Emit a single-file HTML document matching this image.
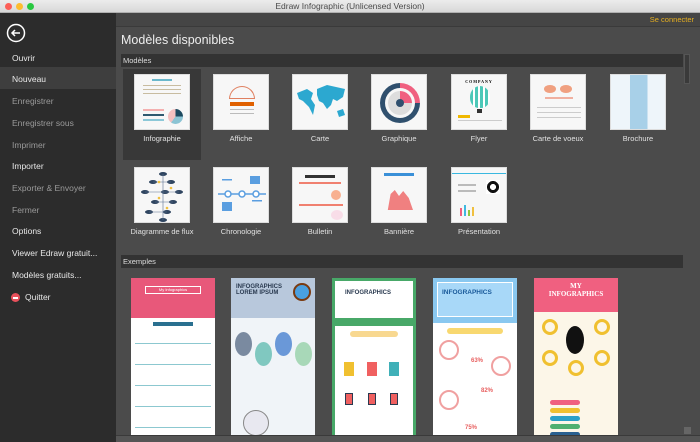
<!DOCTYPE html>
<html><head><meta charset="utf-8"><style>
*{margin:0;padding:0;box-sizing:border-box}
body{width:700px;height:442px;overflow:hidden;background:#4a4a4a;font-family:"Liberation Sans",sans-serif;position:relative}
.tb{position:absolute;left:0;top:0;width:700px;height:13px;background:linear-gradient(#ececec,#d8d8d8);border-bottom:1px solid #b0b0b0;font-size:8.5px;color:#4a4a4a;text-align:center;line-height:13px}
.dot{position:absolute;top:3px;width:7px;height:7px;border-radius:50%}
.side{position:absolute;left:0;top:13px;width:116px;height:429px;background:#2c2c2c}
.side div.i{position:absolute;left:12px;font-size:8.5px;color:#e8e8e8}
.side div.g{color:#9a9a9a}
.hl{position:absolute;left:0;top:54px;width:116px;height:22px;background:#3e3e3e}
.top{position:absolute;left:116px;top:13px;width:584px;height:14px;background:#454545;border-bottom:1px solid #3a3a3a}
.main{position:absolute;left:116px;top:27px;width:584px;height:408px;background:#4b4b4b}
.h1{position:absolute;left:121px;top:33px;font-size:12.5px;color:#eee}
.bar{position:absolute;left:121px;width:562px;height:13px;background:#333;color:#ddd;font-size:7.5px;line-height:13px;padding-left:2px}
.th{position:absolute;width:56px;height:56px;background:#f7f7f7;border:1px solid #ddd;overflow:hidden}
.lb{position:absolute;width:80px;text-align:center;font-size:7.5px;color:#e0e0e0}
.ex{position:absolute;top:278px;width:84px;height:157px;overflow:hidden;background:#fff}
</style></head><body>
<div class="tb">Edraw Infographic (Unlicensed Version)
<div class="dot" style="left:5px;background:#fc5f57"></div><div class="dot" style="left:16px;background:#fdbc2e"></div><div class="dot" style="left:27px;background:#29c840"></div></div>
<div class="side">
<div class="hl"></div>
<svg style="position:absolute;left:6px;top:10px" width="20" height="20"><circle cx="10" cy="10" r="8.5" fill="none" stroke="#fff" stroke-width="1.5"/><path d="M14 10H6M9 7L6 10L9 13" fill="none" stroke="#fff" stroke-width="1.5"/></svg>
<div class="i" style="top:40px">Ouvrir</div>
<div class="i" style="top:61px">Nouveau</div>
<div class="i g" style="top:83px">Enregistrer</div>
<div class="i g" style="top:105px">Enregistrer sous</div>
<div class="i g" style="top:127px">Imprimer</div>
<div class="i" style="top:148px">Importer</div>
<div class="i g" style="top:170px">Exporter &amp; Envoyer</div>
<div class="i g" style="top:192px">Fermer</div>
<div class="i" style="top:213px">Options</div>
<div class="i" style="top:235px">Viewer Edraw gratuit...</div>
<div class="i" style="top:257px">Modèles gratuits...</div>
<div class="i" style="top:279px;left:25px">Quitter</div>
<div style="position:absolute;left:11px;top:280px;width:9px;height:9px;border-radius:50%;background:#e8505b"><div style="margin:4px 2px 0;height:1.5px;background:#fff"></div></div>
</div>
<div class="top"><span style="position:absolute;right:6px;top:2px;font-size:7.5px;color:#e8b020">Se connecter</span></div>
<div class="main"></div>
<div class="h1">Modèles disponibles</div>
<div class="bar" style="top:54px">Modèles</div>
<div style="position:absolute;left:684px;top:54px;width:6px;height:30px;background:#3a3a3a;border:1px solid #555"></div>
<div style="position:absolute;left:123px;top:69px;width:78px;height:91px;background:#383838"></div>
<!-- row 1 -->
<div class="th" style="left:134px;top:74px"><div style="margin:4px 17px;height:2px;background:#6ab8cc"></div><div style="margin:4px 8px 0;height:1px;background:#c8bca0"></div><div style="margin:3px 8px 0;height:1px;background:#c8bca0"></div><div style="margin:3px 8px 0;height:1px;background:#c8bca0"></div><div style="position:absolute;left:8px;top:34px;width:21px;height:2px;background:#f4b0b0"></div><div style="position:absolute;left:8px;top:39px;width:21px;height:2px;background:#2f5a70"></div><div style="position:absolute;left:8px;top:44px;width:21px;height:2px;background:#8cc8d8"></div><div style="position:absolute;left:33px;top:34px;width:15px;height:15px;border-radius:50%;background:conic-gradient(#1c4a60 0 25%,#8cc4d4 25% 60%,#f4c0c0 60%)"></div></div>
<div class="th" style="left:213px;top:74px"><div style="position:absolute;left:15px;top:11px;width:26px;height:13px;border:1.5px solid #e08060;border-radius:13px 13px 0 0"></div><div style="position:absolute;left:16px;top:27px;width:24px;height:4px;background:#e06000"></div><div style="position:absolute;left:16px;top:34px;width:24px;height:1px;background:#bbb"></div><div style="position:absolute;left:16px;top:38px;width:24px;height:1px;background:#bbb"></div></div>
<div class="th" style="left:292px;top:74px"><svg width="56" height="56"><path d="M4 18 L14 14 L20 18 L18 24 L22 30 L20 40 L16 32 L10 26 L6 24Z M24 14 L34 10 L52 14 L50 22 L44 26 L40 24 L38 30 L34 34 L30 28 L26 26 L24 20Z M44 36 L50 34 L52 40 L46 42Z" fill="#2ca8d0"/></svg></div>
<div class="th" style="left:371px;top:74px"><div style="position:absolute;left:8px;top:8px;width:40px;height:40px;border-radius:50%;background:conic-gradient(#f06080 0 25%,#30506e 25%)"></div><div style="position:absolute;left:13px;top:13px;width:30px;height:30px;border-radius:50%;background:#f7f7f7"></div><div style="position:absolute;left:16px;top:16px;width:24px;height:24px;border-radius:50%;background:conic-gradient(#f06080 0 25%,#ddd 25%)"></div><div style="position:absolute;left:24px;top:24px;width:8px;height:8px;border-radius:50%;background:#30506e"></div></div>
<div class="th" style="left:451px;top:74px"><div style="text-align:center;font:bold 4px 'Liberation Serif',serif;letter-spacing:1px;margin-top:4px">COMPANY</div><div style="position:absolute;left:18px;top:11px;width:20px;height:22px;border-radius:50% 50% 45% 45%;background:repeating-linear-gradient(90deg,#4cc8b8 0 3px,#fff 3px 5px)"></div><div style="position:absolute;left:25px;top:34px;width:5px;height:4px;background:#333"></div><div style="position:absolute;left:6px;top:40px;width:12px;height:3px;background:#f0b800"></div><div style="position:absolute;left:6px;top:45px;width:44px;height:1px;background:#ccc"></div></div>
<div class="th" style="left:530px;top:74px"><div style="position:absolute;left:13px;top:10px;width:12px;height:8px;border-radius:50%;background:#f0a080"></div><div style="position:absolute;left:29px;top:10px;width:12px;height:8px;border-radius:50%;background:#f0a080"></div><div style="position:absolute;left:14px;top:22px;width:28px;height:2px;background:#f0b0a0"></div><div style="position:absolute;left:6px;top:32px;width:44px;height:1px;background:#ccc"></div><div style="position:absolute;left:6px;top:37px;width:44px;height:1px;background:#ccc"></div><div style="position:absolute;left:6px;top:42px;width:44px;height:1px;background:#ccc"></div></div>
<div class="th" style="left:610px;top:74px;background:linear-gradient(90deg,#eef5fa 0 35%,#a8d0e8 35% 68%,#eef5fa 68%)"></div>
<div class="lb" style="left:122px;top:134px">Infographie</div>
<div class="lb" style="left:201px;top:134px">Affiche</div>
<div class="lb" style="left:280px;top:134px">Carte</div>
<div class="lb" style="left:359px;top:134px">Graphique</div>
<div class="lb" style="left:439px;top:134px">Flyer</div>
<div class="lb" style="left:518px;top:134px">Carte de voeux</div>
<div class="lb" style="left:598px;top:134px">Brochure</div>
<!-- row 2 -->
<div class="th" style="left:134px;top:167px"><svg width="56" height="56" fill="#2f4560"><ellipse cx="28" cy="6" rx="4" ry="2"/><ellipse cx="18" cy="14" rx="4" ry="2"/><ellipse cx="36" cy="14" rx="4" ry="2"/><ellipse cx="10" cy="24" rx="4" ry="2"/><ellipse cx="30" cy="24" rx="4" ry="2"/><ellipse cx="44" cy="24" rx="4" ry="2"/><ellipse cx="20" cy="34" rx="4" ry="2"/><ellipse cx="38" cy="34" rx="4" ry="2"/><ellipse cx="14" cy="44" rx="4" ry="2"/><ellipse cx="32" cy="44" rx="4" ry="2"/><ellipse cx="28" cy="52" rx="4" ry="2"/><path d="M28 6V52M18 14H36M10 24H44M20 34H38M14 44H32" stroke="#5a7090" stroke-width=".6" fill="none"/><circle cx="24" cy="14" r="1.3" fill="#f0c040"/><circle cx="36" cy="20" r="1.3" fill="#f0c040"/><circle cx="24" cy="30" r="1.3" fill="#f0c040"/><circle cx="32" cy="40" r="1.3" fill="#f0c040"/></svg></div>
<div class="th" style="left:213px;top:167px"><svg width="56" height="56"><path d="M4 26H52" stroke="#5a9ee0" stroke-width="1.5"/><circle cx="14" cy="26" r="3" fill="#fff" stroke="#5a9ee0" stroke-width="1.5"/><circle cx="28" cy="26" r="3" fill="#fff" stroke="#5a9ee0" stroke-width="1.5"/><circle cx="42" cy="26" r="3" fill="#fff" stroke="#5a9ee0" stroke-width="1.5"/><rect x="36" y="8" width="10" height="8" fill="#5a9ee0"/><rect x="8" y="34" width="10" height="9" fill="#5a9ee0"/><rect x="8" y="11" width="10" height="1.5" fill="#5a9ee0"/><rect x="38" y="32" width="10" height="1.5" fill="#5a9ee0"/></svg></div>
<div class="th" style="left:292px;top:167px"><div style="margin:7px 12px 0;height:3px;background:#333"></div><div style="margin:4px 6px 0;height:2px;background:#f08070"></div><div style="position:absolute;left:38px;top:22px;width:10px;height:10px;border-radius:50%;background:#f8b090"></div><div style="position:absolute;left:6px;top:36px;width:44px;height:2px;background:#f08070"></div><div style="position:absolute;left:38px;top:42px;width:12px;height:10px;border-radius:50%;background:#f8dde8"></div></div>
<div class="th" style="left:371px;top:167px"><div style="margin:5px 12px 0;height:3px;background:#3a90d8"></div><div style="position:absolute;left:13px;top:22px;width:28px;height:20px;background:#f08080;clip-path:polygon(10% 100%,20% 20%,35% 0,50% 30%,65% 5%,85% 40%,100% 100%)"></div></div>
<div class="th" style="left:451px;top:167px"><div style="margin-top:5px;height:1px;background:#3ab8e0"></div><div style="position:absolute;left:6px;top:16px;width:18px;height:1.5px;background:#bbb"></div><div style="position:absolute;left:6px;top:22px;width:18px;height:1.5px;background:#bbb"></div><div style="position:absolute;left:34px;top:12px;width:14px;height:14px;background:radial-gradient(circle,#fff 30%,#111 31% 60%,#fff 61%)"></div><div style="position:absolute;left:8px;top:40px;width:2px;height:8px;background:#f06080"></div><div style="position:absolute;left:12px;top:37px;width:2px;height:11px;background:#40b8e0"></div><div style="position:absolute;left:16px;top:42px;width:2px;height:6px;background:#90c840"></div><div style="position:absolute;left:20px;top:39px;width:2px;height:9px;background:#f0c040"></div></div>
<div class="lb" style="left:122px;top:227px">Diagramme de flux</div>
<div class="lb" style="left:201px;top:227px">Chronologie</div>
<div class="lb" style="left:280px;top:227px">Bulletin</div>
<div class="lb" style="left:359px;top:227px">Bannière</div>
<div class="lb" style="left:439px;top:227px">Présentation</div>
<div class="bar" style="top:255px">Exemples</div>
<!-- examples -->
<div class="ex" style="left:131px;background:#fff"><div style="height:40px;background:#e8587a"></div><div style="position:absolute;left:14px;top:8px;width:56px;height:8px;border:1px solid #fff;color:#fff;font-size:4px;text-align:center">My Infographics</div><div style="position:absolute;left:22px;top:44px;width:40px;height:4px;background:#2a7090"></div><div style="position:absolute;left:4px;top:65px;width:76px;height:1px;background:#8cc8d0"></div><div style="position:absolute;left:4px;top:86px;width:76px;height:1px;background:#8cc8d0"></div><div style="position:absolute;left:4px;top:107px;width:76px;height:1px;background:#8cc8d0"></div><div style="position:absolute;left:4px;top:128px;width:76px;height:1px;background:#8cc8d0"></div><div style="position:absolute;left:4px;top:149px;width:76px;height:1px;background:#8cc8d0"></div></div>
<div class="ex" style="left:231px;background:#f0f4f8"><div style="height:40px;background:#b8c8dc"></div><div style="position:absolute;left:5px;top:6px;font:bold 6px 'Liberation Sans';color:#2a3a50">INFOGRAPHICS<br>LOREM IPSUM</div><div style="position:absolute;left:62px;top:5px;width:18px;height:18px;border-radius:50%;background:#4aa0e0;border:2px solid #7a3a10"></div><div style="position:absolute;left:4px;top:54px;width:17px;height:24px;border-radius:50%;background:#7a8aa0"></div><div style="position:absolute;left:24px;top:64px;width:17px;height:24px;border-radius:50%;background:#80c8c0"></div><div style="position:absolute;left:44px;top:54px;width:17px;height:24px;border-radius:50%;background:#6a98d8"></div><div style="position:absolute;left:64px;top:64px;width:17px;height:24px;border-radius:50%;background:#a8d8b8"></div><div style="position:absolute;left:12px;top:132px;width:26px;height:26px;border-radius:50%;background:#e8e8f0;border:1px solid #888"></div></div>
<div class="ex" style="left:332px;background:#48a868"><div style="position:absolute;left:3px;top:3px;width:78px;height:37px;background:#fff"></div><div style="position:absolute;left:13px;top:12px;font:bold 6px 'Liberation Sans';color:#2a3a50">INFOGRAPHICS</div><div style="position:absolute;left:3px;top:48px;width:78px;height:112px;background:#fff"></div><div style="position:absolute;left:18px;top:53px;width:48px;height:6px;border-radius:3px;background:#f8d890"></div><div style="position:absolute;left:12px;top:84px;width:10px;height:14px;background:#f0c030"></div><div style="position:absolute;left:35px;top:84px;width:10px;height:14px;background:#f06060"></div><div style="position:absolute;left:57px;top:84px;width:10px;height:14px;background:#40b0b8"></div><div style="position:absolute;left:13px;top:115px;width:8px;height:12px;background:#f06060;border:1px solid #2a3a50"></div><div style="position:absolute;left:36px;top:115px;width:8px;height:12px;background:#f06060;border:1px solid #2a3a50"></div><div style="position:absolute;left:58px;top:115px;width:8px;height:12px;background:#f06060;border:1px solid #2a3a50"></div></div>
<div class="ex" style="left:433px;background:#fff"><div style="height:45px;background:#8ac8f0;padding:4px"><div style="height:35px;background:#a8d8f8;border:1px solid #fff"></div></div><div style="position:absolute;left:9px;top:11px;font:bold 6.5px 'Liberation Sans';color:#1a5a9a">INFOGRAPHICS</div><div style="position:absolute;left:14px;top:50px;width:56px;height:6px;border-radius:3px;background:#f8d870"></div><div style="position:absolute;left:6px;top:62px;width:20px;height:20px;border-radius:50%;border:2px solid #f0a0a0"></div><div style="position:absolute;left:58px;top:78px;width:20px;height:20px;border-radius:50%;border:2px solid #f0a0a0"></div><div style="position:absolute;left:6px;top:112px;width:20px;height:20px;border-radius:50%;border:2px solid #f0a0a0"></div><div style="position:absolute;left:38px;top:80px;font:bold 6px 'Liberation Sans';color:#e86060">63%</div><div style="position:absolute;left:48px;top:110px;font:bold 6px 'Liberation Sans';color:#e86060">82%</div><div style="position:absolute;left:32px;top:147px;font:bold 6px 'Liberation Sans';color:#e86060">75%</div></div>
<div class="ex" style="left:534px;background:#fcf6e8"><div style="height:34px;background:#f06080;color:#fff;text-align:center;font:bold 7px 'Liberation Serif',serif;padding-top:4px">MY<br>INFOGRAPHICS</div><div style="position:absolute;left:8px;top:41px;width:16px;height:16px;border-radius:50%;border:3px solid #f0c030"></div><div style="position:absolute;left:60px;top:41px;width:16px;height:16px;border-radius:50%;border:3px solid #f0c030"></div><div style="position:absolute;left:8px;top:72px;width:16px;height:16px;border-radius:50%;border:3px solid #f0c030"></div><div style="position:absolute;left:60px;top:72px;width:16px;height:16px;border-radius:50%;border:3px solid #f0c030"></div><div style="position:absolute;left:34px;top:82px;width:16px;height:16px;border-radius:50%;border:3px solid #f0c030"></div><div style="position:absolute;left:32px;top:48px;width:18px;height:28px;border-radius:50%;background:#111"></div><div style="position:absolute;left:16px;top:122px;width:30px;height:5px;border-radius:3px;background:#f06080"></div><div style="position:absolute;left:16px;top:130px;width:30px;height:5px;border-radius:3px;background:#f0c030"></div><div style="position:absolute;left:16px;top:138px;width:30px;height:5px;border-radius:3px;background:#2aa0c8"></div><div style="position:absolute;left:16px;top:146px;width:30px;height:5px;border-radius:3px;background:#50b070"></div><div style="position:absolute;left:16px;top:154px;width:30px;height:5px;border-radius:3px;background:#2a6090"></div></div>
<div style="position:absolute;left:684px;top:427px;width:7px;height:7px;background:#666"></div>
<div style="position:absolute;left:116px;top:435px;width:584px;height:7px;background:#555;border-top:1px solid #3a3a3a"></div>
</body></html>
